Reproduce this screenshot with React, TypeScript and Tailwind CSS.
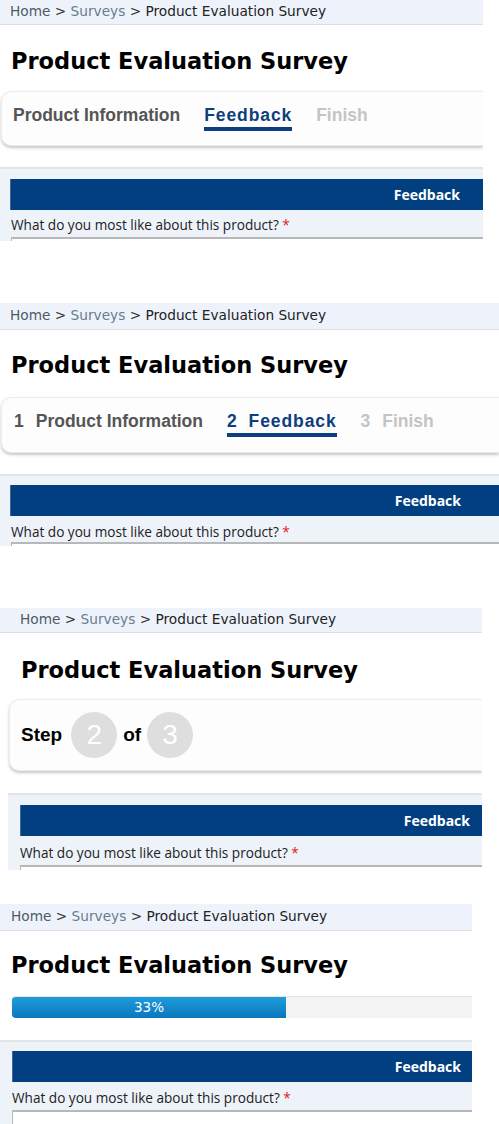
import React from 'react';

// 面包屑
const Breadcrumb: React.FC<{ className: string }> = ({ className }) => (
  <div
    className={`bg-[#eef3fb] border-b border-[#dcdfe4] text-[13.7px] whitespace-nowrap ${className}`}
    style={{ fontFamily: '"DejaVu Sans", Verdana, sans-serif' }}
  >
    <span className="text-[#4f5a66]">Home</span>
    <span className="text-[#333]"> &gt; </span>
    <span className="text-[#6a7c90]">Surveys</span>
    <span className="text-[#333]"> &gt; </span>
    <span className="text-[#222]">Product Evaluation Survey</span>
  </div>
);

const Title: React.FC<{ className: string }> = ({ className }) => (
  <h1
    className={`text-[22.5px] leading-[28px] font-bold text-black whitespace-nowrap ${className}`}
    style={{ fontFamily: '"DejaVu Sans", Verdana, sans-serif' }}
  >
    Product Evaluation Survey
  </h1>
);

// 反馈区块
const FeedbackSection: React.FC<{ className: string; barClass: string; qClass: string; inputClass: string }> = ({
  className,
  barClass,
  qClass,
  inputClass,
}) => (
  <div
    className={`bg-[#eef3fa] border-t-2 border-[#e2e4e7] ${className}`}
    style={{ fontFamily: '"Open Sans", "Segoe UI", sans-serif' }}
  >
    <div className={`h-[31px] bg-[#023f81] border-l border-[#3a6aa0] flex items-center justify-end ${barClass}`}>
      <span className="text-white text-[14px] font-bold">Feedback</span>
    </div>
    <div className={`text-[13.6px] leading-[18px] text-[#222] whitespace-nowrap ${qClass}`}>
      What do you most like about this product? <span className="text-[#e02020]">*</span>
    </div>
    <div className={`bg-white border-t-2 border-l border-[#b8b8b8] ${inputClass}`} />
  </div>
);

const tabFont = { fontFamily: '"Liberation Sans", Arial, sans-serif' };

const App: React.FC = () => {
  return (
    <div className="w-[499px] h-[1124px] bg-white overflow-hidden">
      {/* 面板 1：纯文字选项卡 */}
      <div className="w-[483px] h-[241px] overflow-hidden">
        <Breadcrumb className="h-[25px] leading-[23px] pl-[10px]" />
        <Title className="mt-[22px] pl-[11px]" />
        <div
          className="mt-[16px] ml-[1px] h-[55px] bg-[#fdfdfd] border border-[#ececec] border-r-0 rounded-l-[10px] shadow-[0_2px_3px_rgba(0,0,0,0.22)] flex items-start pt-[11px] pl-[11px] gap-[24px] text-[17.5px] font-bold leading-[24px] whitespace-nowrap"
          style={tabFont}
        >
          <span className="text-[#555]">Product Information</span>
          <span className="text-[#0d3f7e] border-b-4 border-[#0d3f7e] tracking-[0.9px]">Feedback</span>
          <span className="text-[#c4c4c4]">Finish</span>
        </div>
        <FeedbackSection
          className="mt-[21px] pt-[10px]"
          barClass="ml-[10px] pr-[23px]"
          qClass="mt-[6px] pl-[11px]"
          inputClass="mt-[3px] ml-[11px] h-[10px]"
        />
      </div>

      {/* 面板 2：带编号的选项卡 */}
      <div className="mt-[62px] w-[499px] h-[243px] overflow-hidden">
        <Breadcrumb className="h-[27px] leading-[25px] pl-[10px]" />
        <Title className="mt-[21px] pl-[11px]" />
        <div
          className="mt-[18px] ml-[1px] h-[56px] bg-[#fdfdfd] border border-[#ececec] border-r-0 rounded-l-[10px] shadow-[0_2px_3px_rgba(0,0,0,0.22)] flex items-start pt-[11px] pl-[12px] gap-[24px] text-[17.5px] font-bold leading-[24px] whitespace-nowrap"
          style={tabFont}
        >
          <span className="text-[#555]">
            <span className="mr-[12px]">1</span>Product Information
          </span>
          <span className="text-[#0d3f7e] border-b-4 border-[#0d3f7e] tracking-[0.9px]">
            <span className="mr-[11px]">2</span>Feedback
          </span>
          <span className="text-[#c4c4c4]">
            <span className="mr-[12px]">3</span>Finish
          </span>
        </div>
        <FeedbackSection
          className="mt-[21px] pt-[9px]"
          barClass="ml-[10px] pr-[38px]"
          qClass="mt-[7px] pl-[11px]"
          inputClass="mt-[1px] ml-[11px] h-[10px]"
        />
      </div>

      {/* 面板 3：Step x of y */}
      <div className="mt-[62px] w-[482px] h-[262px] overflow-hidden">
        <Breadcrumb className="h-[25px] leading-[23px] pl-[20px]" />
        <Title className="mt-[23px] pl-[21px]" />
        <div
          className="mt-[15px] ml-[9px] h-[72px] bg-[#fdfdfd] border border-[#ececec] border-r-0 rounded-l-[10px] shadow-[0_2px_3px_rgba(0,0,0,0.22)] flex items-center pl-[11px] whitespace-nowrap"
          style={tabFont}
        >
          <span className="text-[19px] font-bold text-black">Step</span>
          <span className="ml-[9px] w-[46px] h-[46px] rounded-full bg-[#dedede] flex items-center justify-center text-white text-[28px]">
            2
          </span>
          <span className="ml-[6px] text-[19px] font-bold text-black">of</span>
          <span className="ml-[6px] w-[46px] h-[46px] rounded-full bg-[#dedede] flex items-center justify-center text-white text-[28px]">
            3
          </span>
        </div>
        <FeedbackSection
          className="mt-[22px] ml-[8px] pt-[10px]"
          barClass="ml-[12px] pr-[12px]"
          qClass="mt-[8px] pl-[12px]"
          inputClass="mt-[3px] ml-[12px] h-[10px]"
        />
      </div>

      {/* 面板 4：进度条 */}
      <div className="mt-[34px] w-[472px] h-[220px] overflow-hidden">
        <Breadcrumb className="h-[27px] leading-[25px] pl-[11px]" />
        <Title className="mt-[20px] pl-[11px]" />
        <div className="mt-[17px] ml-[12px] h-[22px] bg-[#f3f3f3] border-t border-[#e6e6e6] rounded-l-[4px] overflow-hidden flex">
          <div
            className="w-[274px] h-full bg-gradient-to-b from-[#1e9ddb] to-[#0a76bd] flex items-center justify-center text-white text-[13.5px]"
            style={{ fontFamily: '"DejaVu Sans", Verdana, sans-serif' }}
          >
            33%
          </div>
        </div>
        <FeedbackSection
          className="mt-[22px] pt-[9px]"
          barClass="ml-[12px] pr-[11px]"
          qClass="mt-[7px] pl-[12px]"
          inputClass="mt-[3px] ml-[12px] h-[20px]"
        />
      </div>
    </div>
  );
};

export default App;
